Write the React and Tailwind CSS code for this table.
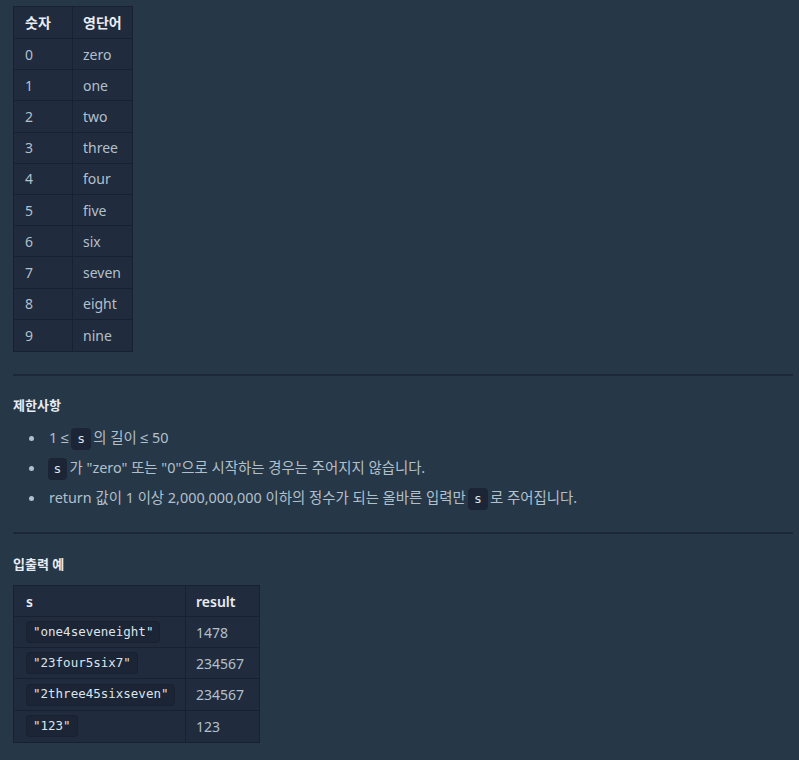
import React from "react";

const font = { fontFamily: '"Noto Sans", "Noto Sans CJK KR", sans-serif' };
const mono = '"DejaVu Sans Mono", "Liberation Mono", monospace';

function Code({ children }) {
  return (
    <code
      className="inline-flex items-center h-[22px] px-[6px] mx-[-1.5px] rounded-[4px] bg-[#1b2535] text-[#dde3ea] text-[13px] align-middle"
      style={{ fontFamily: mono }}
    >
      {children}
    </code>
  );
}

function Le() {
  return <span style={{ fontFamily: '"Liberation Sans", sans-serif' }}>≤</span>;
}

const words = ["zero", "one", "two", "three", "four", "five", "six", "seven", "eight", "nine"];
const examples = [
  ['"one4seveneight"', "1478"],
  ['"23four5six7"', "234567"],
  ['"2three45sixseven"', "234567"],
  ['"123"', "123"],
];

function Bullet({ children }) {
  return (
    <li className="flex items-center h-[22px]">
      <span className="w-[5px] h-[5px] rounded-full bg-[#b2c0cc] ml-[16px] mr-[15px] shrink-0" />
      <span className="whitespace-pre text-[14.4px] leading-[22px]">{children}</span>
    </li>
  );
}

export default function App() {
  return (
    <div className="w-[799px] h-[760px] bg-[#263747] overflow-hidden text-[#b2c0cc] text-[14px]" style={font}>
      <div className="pl-[13px] pr-[6px] pt-[6px]">
        <div className="w-[120px] bg-[#202b3d] border border-[#172130]">
          <div className="grid grid-cols-[59px_61px] h-[32px] border-b border-[#172130] text-[#e9ecf3] font-semibold">
            <div className="flex items-center pl-[11px] border-r border-[#172130]">숫자</div>
            <div className="flex items-center pl-[10px]">영단어</div>
          </div>
          {words.map((w, i) => (
            <div
              key={w}
              className={`grid grid-cols-[59px_61px] h-[31.2px] ${i < 9 ? "border-b border-[#172130]" : ""}`}
            >
              <div className="flex items-center pl-[11px] border-r border-[#172130]">{i}</div>
              <div className="flex items-center pl-[10px]">{w}</div>
            </div>
          ))}
        </div>

        <div className="mt-[22px] h-[2px] bg-[#1c2839]" />

        <h3 className="mt-[19px] text-[13px] font-bold text-[#e9ecf3] leading-[20px]">제한사항</h3>
        <ul className="mt-[13px] flex flex-col gap-[8px]">
          <Bullet>
            1 <Le /> <Code>s</Code> 의 길이 <Le /> 50
          </Bullet>
          <Bullet>
            <Code>s</Code> 가 "zero" 또는 "0"으로 시작하는 경우는 주어지지 않습니다.
          </Bullet>
          <Bullet>
            return 값이 1 이상 2,000,000,000 이하의 정수가 되는 올바른 입력만 <Code>s</Code> 로 주어집니다.
          </Bullet>
        </ul>

        <div className="mt-[22px] h-[2px] bg-[#1c2839]" />

        <h3 className="mt-[20px] text-[13px] font-bold text-[#e9ecf3] leading-[20px]">입출력 예</h3>

        <div className="mt-[11px] w-[247px] bg-[#202b3d] border border-[#172130]">
          <div className="grid grid-cols-[172px_75px] h-[31px] border-b border-[#172130] text-[#e9ecf3] font-semibold">
            <div className="flex items-center pl-[12px] pt-[2px] border-r border-[#172130]">s</div>
            <div className="flex items-center pl-[10px] pt-[2px]">result</div>
          </div>
          {examples.map(([s, r], i) => (
            <div
              key={s}
              className={`grid grid-cols-[172px_75px] h-[31.3px] ${i < 3 ? "border-b border-[#172130]" : ""}`}
            >
              <div className="flex items-center pl-[12px] border-r border-[#172130]">
                <code
                  className="inline-flex items-center h-[22px] px-[6px] rounded-[4px] bg-[#1b2535] border border-[#18212f] text-[#dde3ea] text-[12.5px]"
                  style={{ fontFamily: mono }}
                >
                  {s}
                </code>
              </div>
              <div className="flex items-center pl-[10px]">{r}</div>
            </div>
          ))}
        </div>
      </div>
    </div>
  );
}
